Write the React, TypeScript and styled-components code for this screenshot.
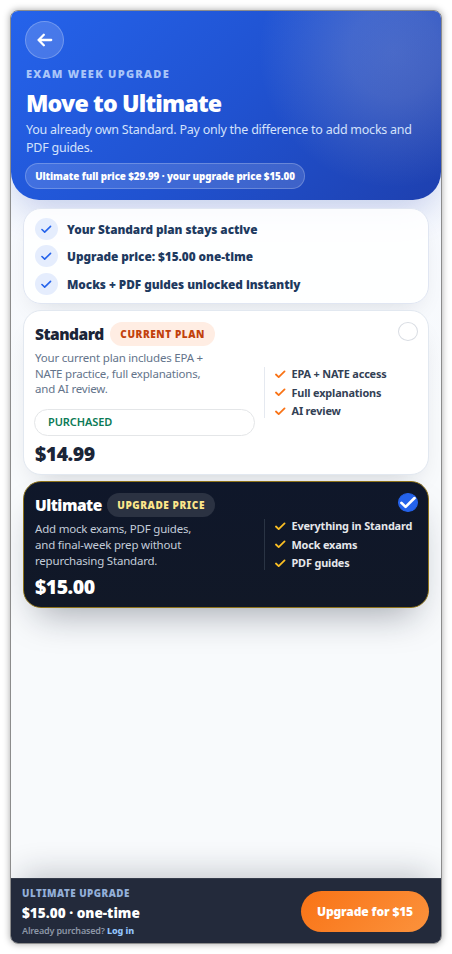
import { useState } from "react";
import styled, { createGlobalStyle, css } from "styled-components";

const GlobalStyle = createGlobalStyle`
  * {
    box-sizing: border-box;
  }
  body {
    background: #fff;
    font-family: "Noto Sans", "Open Sans", sans-serif;
    margin: 0;
  }
`;

const Screen = styled.div`
  background: linear-gradient(180deg, #f5f8ff 0%, #f8fafc 45%, #f8fafc 100%);
  border: 1px solid #8c8c8c;
  border-radius: 8px;
  box-shadow: 0 0 7px rgba(0, 0, 0, 0.35);
  display: flex;
  flex-direction: column;
  height: 934px;
  margin: 10px;
  overflow: hidden;
`;

const Hero = styled.header`
  background: radial-gradient(
      circle at 89% 22%,
      rgba(253, 234, 215, 0.19) 0,
      rgba(253, 234, 215, 0.16) 45px,
      rgba(253, 234, 215, 0) 135px
    ),
    linear-gradient(135deg, #2563eb 0%, #2052d0 52%, #1e40af 100%);
  border-radius: 0 0 28px 28px;
  box-shadow: 0 16px 36px -6px rgba(30, 64, 175, 0.24);
  color: #fff;
  height: 189px;
  padding: 10px 14px 0;
`;
const BackButton = styled.button`
  align-items: center;
  background: rgba(255, 255, 255, 0.16);
  border: 1px solid rgba(255, 255, 255, 0.24);
  border-radius: 50%;
  color: #fff;
  display: flex;
  height: 38px;
  justify-content: center;
  padding: 0;
  width: 39px;
`;
const Eyebrow = styled.div`
  color: #a9c5f8;
  font-size: 11px;
  font-weight: 900;
  letter-spacing: 1.27px;
  line-height: 14px;
  margin: 8px 0 0 1px;
`;
const Title = styled.h1`
  font-size: 23.2px;
  font-weight: 900;
  letter-spacing: -0.83px;
  line-height: 28px;
  margin: 8px 0 0 1px;
`;
const Subtitle = styled.p`
  color: #d3e1fb;
  font-size: 12.5px;
  letter-spacing: -0.24px;
  line-height: 18.4px;
  margin: 4px 0 0 1px;
`;
const PricePill = styled.div`
  align-items: center;
  background: rgba(255, 255, 255, 0.14);
  border: 1px solid rgba(255, 255, 255, 0.22);
  border-radius: 13px;
  display: flex;
  font-size: 9.8px;
  font-weight: 900;
  height: 26px;
  justify-content: center;
  letter-spacing: -0.08px;
  margin-top: 5.2px;
  white-space: nowrap;
  width: 280px;
`;

const Content = styled.main`
  display: flex;
  flex: 1;
  flex-direction: column;
  gap: 6px;
  padding: 8px 12px 0;
`;

const Benefits = styled.ul`
  background: rgba(255, 255, 255, 0.88);
  border: 1px solid #e0e6f2;
  border-radius: 18px;
  box-shadow: 0 12px 26px -12px rgba(15, 23, 42, 0.14);
  display: flex;
  flex-direction: column;
  gap: 5.4px;
  height: 96px;
  list-style: none;
  margin: 0;
  padding: 9px 11px;
`;
const Benefit = styled.li`
  align-items: center;
  color: #1e3a5f;
  display: flex;
  font-size: 11.8px;
  font-weight: 900;
  gap: 9px;
  height: 22px;
  letter-spacing: -0.05px;
  line-height: 20px;
`;
const BenefitIcon = styled.span`
  align-items: center;
  background: #e5edfd;
  border-radius: 50%;
  color: #2563eb;
  display: flex;
  height: 22px;
  justify-content: center;
  width: 23px;
`;

type PlanProps = { $dark?: boolean };
const PlanCard = styled.section<PlanProps>`
  background: #fff;
  border: 1px solid #e2e8f0;
  border-radius: 18px;
  box-shadow: 0 14px 28px -14px rgba(15, 23, 42, 0.2);
  color: #1b2537;
  display: grid;
  grid-template-columns: 221px 1fr;
  height: 165px;
  padding: 11px 10px 10px;
  position: relative;

  ${({ $dark }) =>
    $dark &&
    css`
      background: linear-gradient(180deg, #0f172a, #111827);
      border-color: #8d721a;
      box-shadow: 0 20px 36px -14px rgba(15, 23, 42, 0.36);
      color: #fff;
      height: 127px;
    `}
`;
const PlanHeader = styled.div`
  align-items: center;
  display: flex;
  height: 24px;
  justify-content: space-between;
  width: 181px;
`;
const PlanName = styled.h2`
  font-size: 15.5px;
  font-weight: 900;
  letter-spacing: -0.5px;
  line-height: 24px;
  margin: 0 0 0 1px;
`;
const Badge = styled.span<PlanProps>`
  background: ${({ $dark }) => ($dark ? "#2b3242" : "#ffede3")};
  border-radius: 12px;
  color: ${({ $dark }) => ($dark ? "#fde68a" : "#c2410c")};
  font-size: 10px;
  font-weight: 900;
  height: 24px;
  letter-spacing: 0.58px;
  line-height: 24px;
  padding: 0 10px;
`;
const Description = styled.p<PlanProps>`
  color: ${({ $dark }) => ($dark ? "#c3ccd9" : "#64748b")};
  font-size: 11.5px;
  letter-spacing: -0.2px;
  line-height: ${({ $dark }) => ($dark ? 16 : 15.6)}px;
  margin: 4px 0 0 1px;
  width: 175px;
`;
const Purchased = styled.div`
  border: 1px solid #e4e6e8;
  border-radius: 14px;
  color: #0b7a56;
  font-size: 11px;
  font-weight: 600;
  height: 27px;
  letter-spacing: -0.1px;
  line-height: 24px;
  margin-top: 12px;
  padding: 0 13px;
`;
const Price = styled.div`
  font-size: 19.5px;
  font-weight: 900;
  letter-spacing: -0.5px;
  line-height: 20px;
  margin: 8px 0 0 1px;
`;
const Features = styled.ul<PlanProps>`
  align-self: center;
  border-left: 1px solid ${({ $dark }) => ($dark ? "#2a3444" : "#e5e9f0")};
  color: ${({ $dark }) => ($dark ? "#e5e7eb" : "#334155")};
  display: flex;
  flex-direction: column;
  font-size: 10.9px;
  font-weight: 700;
  gap: 4.5px;
  letter-spacing: -0.16px;
  line-height: 14px;
  list-style: none;
  margin: 0 0 1px 9px;
  padding: 0 0 0 10px;
  white-space: nowrap;

  svg {
    color: ${({ $dark }) => ($dark ? "#fbbf24" : "#f97316")};
  }
`;
const Feature = styled.li`
  align-items: center;
  display: flex;
  gap: 6px;
`;
const Radio = styled.button<{ $checked: boolean }>`
  align-items: center;
  background: ${({ $checked }) => ($checked ? "#2563eb" : "#fff")};
  border: 1px solid ${({ $checked }) => ($checked ? "#2563eb" : "#d9dde3")};
  border-radius: 50%;
  color: #fff;
  display: flex;
  height: 19px;
  justify-content: center;
  padding: 0;
  position: absolute;
  right: 10px;
  top: 11px;
  width: 20px;
`;

const Footer = styled.footer`
  align-items: center;
  background: #232a3b;
  border-top: 1px solid #343b4a;
  box-shadow: 0 -14px 32px -10px rgba(15, 23, 42, 0.24);
  color: #fff;
  display: flex;
  height: 65px;
  justify-content: space-between;
  padding: 0 12px 0 11px;
`;
const FooterText = styled.div`
  padding-top: 3px;
`;
const FooterLabel = styled.div`
  color: #93afd8;
  font-size: 9.8px;
  font-weight: 900;
  letter-spacing: 0.5px;
  line-height: 14px;
`;
const FooterPrice = styled.div`
  font-size: 13.6px;
  font-weight: 900;
  line-height: 20px;
  margin-top: 2px;
`;
const FooterNote = styled.div`
  color: #8c96a6;
  font-size: 9px;
  font-weight: 600;
  letter-spacing: -0.17px;
  line-height: 14px;
  margin-top: 1px;
`;
const LoginLink = styled.a`
  color: #93c5fd;
  font-weight: 800;
  letter-spacing: -0.1px;
`;
const UpgradeButton = styled.button`
  background: linear-gradient(135deg, #f97316, #fb923c);
  border: 0;
  border-radius: 21px;
  color: #fff;
  font-family: inherit;
  font-size: 12px;
  font-weight: 900;
  height: 41px;
  letter-spacing: -0.13px;
  padding: 0;
  width: 128px;
`;

type CheckProps = {
  width: number;
  stroke?: number;
};
function Check({ width, stroke = 1.7 }: CheckProps) {
  return (
    <svg
      width={width}
      height={width * 0.8}
      viewBox="0 0 10 8"
      fill="none"
      stroke="currentColor"
      strokeWidth={stroke}
      strokeLinecap="round"
      strokeLinejoin="round"
    >
      <path d="M0.9 4.3 3.5 6.8 9.1 1.3" />
    </svg>
  );
}

const benefits = [
  "Your Standard plan stays active",
  "Upgrade price: $15.00 one-time",
  "Mocks + PDF guides unlocked instantly",
];

const plans = [
  {
    name: "Standard",
    badge: "CURRENT PLAN",
    description:
      "Your current plan includes EPA + NATE practice, full explanations, and AI review.",
    price: "$14.99",
    features: ["EPA + NATE access", "Full explanations", "AI review"],
    purchased: true,
    dark: false,
  },
  {
    name: "Ultimate",
    badge: "UPGRADE PRICE",
    description:
      "Add mock exams, PDF guides, and final-week prep without repurchasing Standard.",
    price: "$15.00",
    features: ["Everything in Standard", "Mock exams", "PDF guides"],
    purchased: false,
    dark: true,
  },
];

export default function App() {
  const [selected, setSelected] = useState("Ultimate");

  return (
    <>
      <GlobalStyle />
      <Screen>
        <Hero>
          <BackButton aria-label="Back">
            <svg
              width="16"
              height="14"
              viewBox="0 0 16 14"
              fill="none"
              stroke="currentColor"
              strokeWidth="2.3"
              strokeLinecap="round"
              strokeLinejoin="round"
            >
              <path d="M14.2 7H1.6M6.8 1.8 1.6 7l5.2 5.2" />
            </svg>
          </BackButton>
          <Eyebrow>EXAM WEEK UPGRADE</Eyebrow>
          <Title>Move to Ultimate</Title>
          <Subtitle>
            You already own Standard. Pay only the difference to add mocks and
            PDF guides.
          </Subtitle>
          <PricePill>
            Ultimate full price $29.99 · your upgrade price $15.00
          </PricePill>
        </Hero>
        <Content>
          <Benefits>
            {benefits.map((benefit) => (
              <Benefit key={benefit}>
                <BenefitIcon>
                  <Check width={10.5} stroke={1.5} />
                </BenefitIcon>
                {benefit}
              </Benefit>
            ))}
          </Benefits>
          {plans.map((plan) => (
            <PlanCard key={plan.name} $dark={plan.dark}>
              <div>
                <PlanHeader>
                  <PlanName>{plan.name}</PlanName>
                  <Badge $dark={plan.dark}>{plan.badge}</Badge>
                </PlanHeader>
                <Description $dark={plan.dark}>{plan.description}</Description>
                {plan.purchased ? <Purchased>PURCHASED</Purchased> : null}
                <Price>{plan.price}</Price>
              </div>
              <Features $dark={plan.dark}>
                {plan.features.map((feature) => (
                  <Feature key={feature}>
                    <Check width={10.5} />
                    {feature}
                  </Feature>
                ))}
              </Features>
              <Radio
                $checked={selected === plan.name}
                aria-label={plan.name}
                onClick={() => setSelected(plan.name)}
              >
                {selected === plan.name ? <Check width={16} /> : null}
              </Radio>
            </PlanCard>
          ))}
        </Content>
        <Footer>
          <FooterText>
            <FooterLabel>ULTIMATE UPGRADE</FooterLabel>
            <FooterPrice>$15.00 · one-time</FooterPrice>
            <FooterNote>
              Already purchased? <LoginLink>Log in</LoginLink>
            </FooterNote>
          </FooterText>
          <UpgradeButton>Upgrade for $15</UpgradeButton>
        </Footer>
      </Screen>
    </>
  );
}
